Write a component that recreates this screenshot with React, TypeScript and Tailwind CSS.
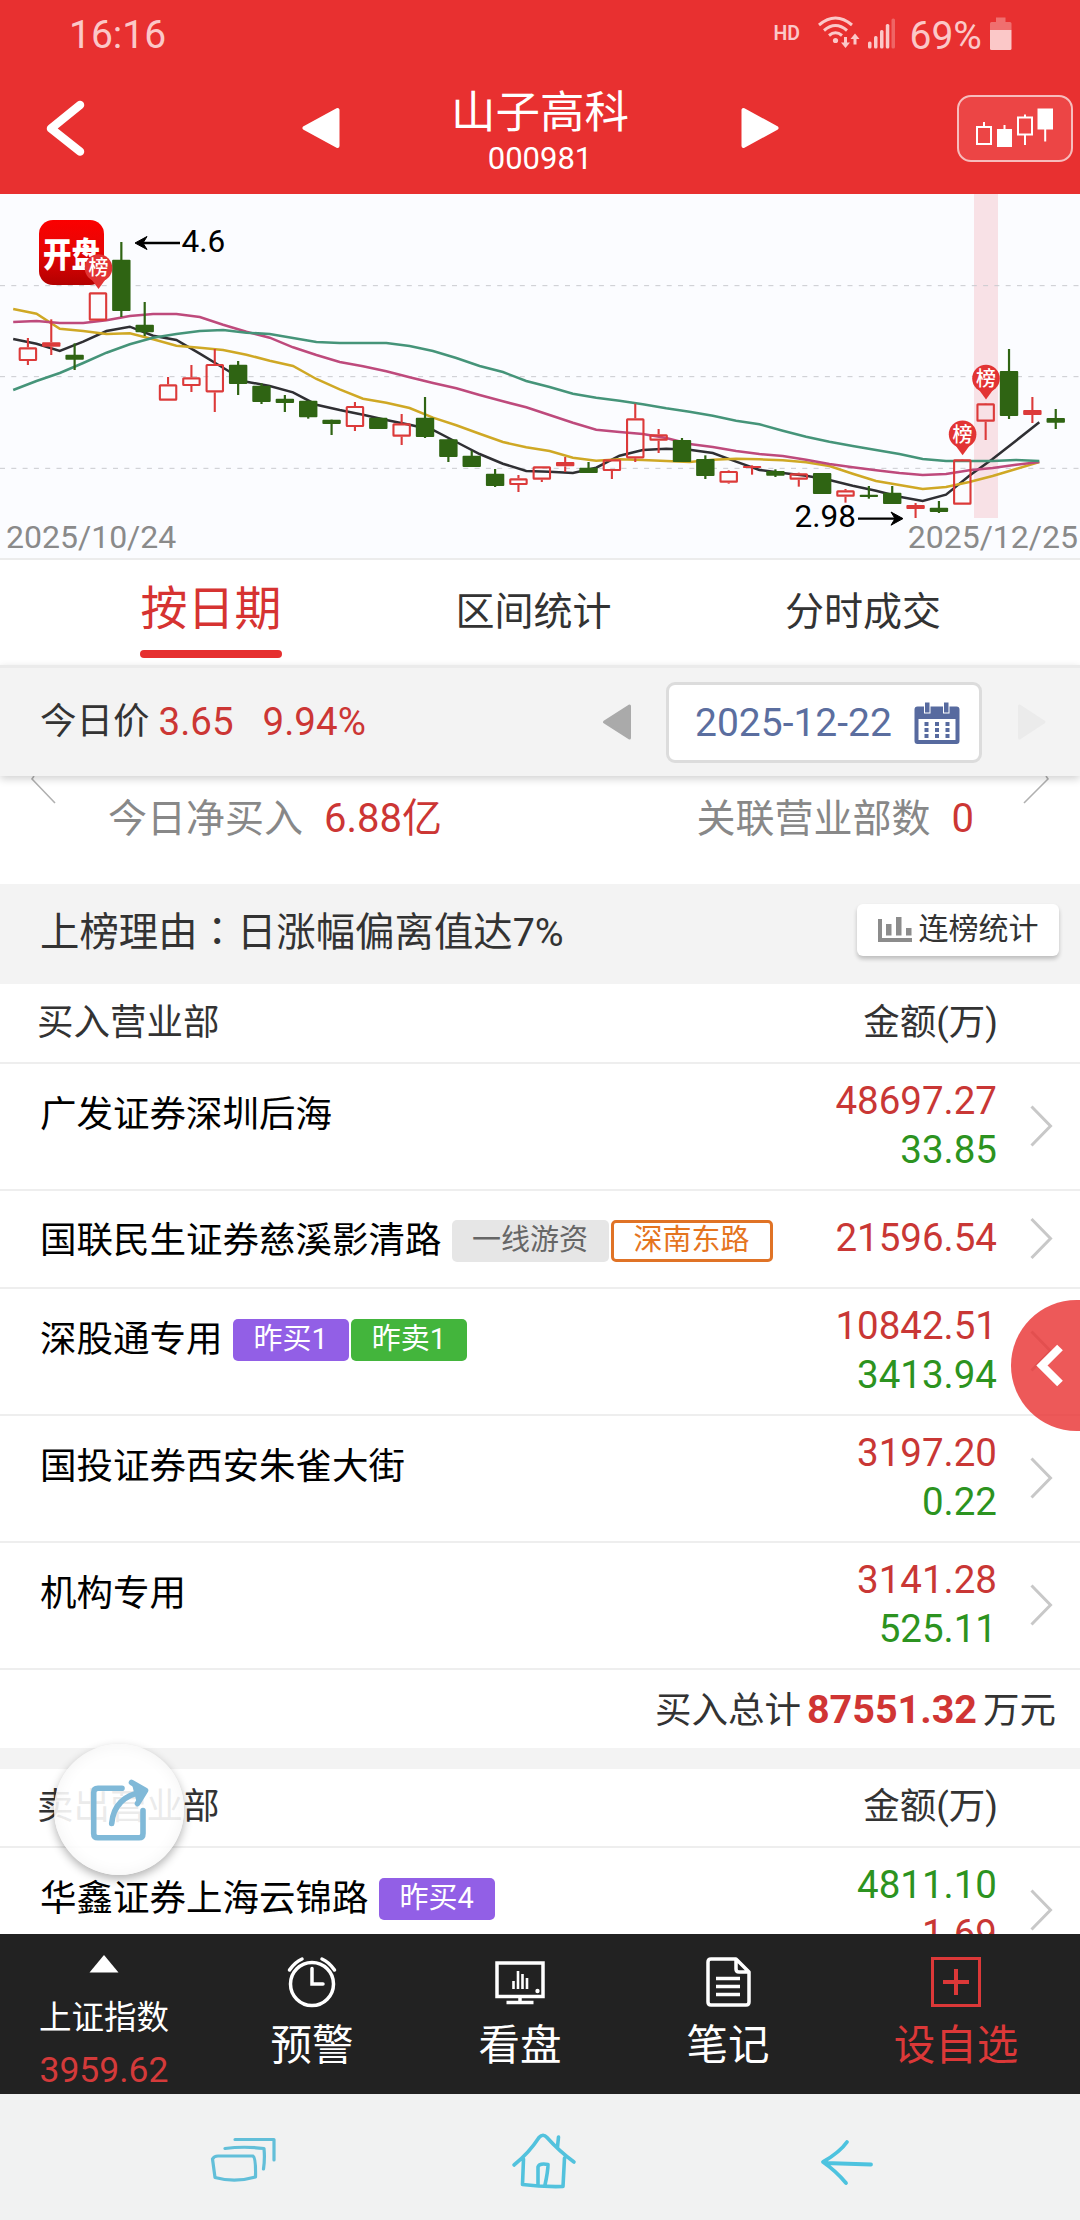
import React from "react";

type Candle = [kind: "r" | "g", high: number, top: number, bottom: number, low: number];

const candles: Candle[] = [
  ["r", 444, 472, 513, 525], ["r", 388, 457, 470, 495], ["g", 460, 494, 509, 540],
  ["r", 307, 307, 392, 392], ["g", 156, 209, 363, 381], ["g", 336, 404, 427, 438],
  ["r", 561, 583, 632, 632], ["r", 525, 562, 588, 606], ["r", 477, 522, 607, 666],
  ["g", 513, 524, 582, 615], ["g", 580, 587, 636, 642], ["g", 615, 626, 639, 666],
  ["g", 632, 632, 682, 686], ["g", 689, 689, 702, 735], ["r", 636, 648, 711, 723],
  ["g", 683, 683, 717, 717], ["r", 672, 700, 740, 765], ["g", 621, 683, 741, 744],
  ["g", 748, 748, 801, 816], ["g", 782, 797, 831, 831], ["g", 837, 851, 888, 891],
  ["r", 855, 865, 885, 906], ["r", 829, 829, 869, 876], ["r", 801, 816, 829, 846],
  ["g", 816, 833, 849, 849], ["r", 808, 808, 843, 867], ["r", 641, 685, 805, 816],
  ["r", 717, 733, 752, 789], ["g", 744, 750, 816, 816], ["g", 796, 807, 858, 867],
  ["r", 841, 843, 878, 881], ["r", 826, 828, 834, 854], ["g", 838, 843, 857, 861],
  ["r", 848, 850, 869, 890], ["g", 849, 849, 912, 912], ["r", 897, 901, 920, 938],
  ["g", 888, 914, 921, 926], ["g", 888, 908, 942, 942], ["r", 939, 945, 957, 984],
  ["g", 933, 953, 966, 969], ["r", 807, 808, 944, 944], ["r", 639, 640, 695, 750],
  ["g", 477, 543, 678, 687], ["r", 621, 660, 675, 699], ["g", 657, 684, 698, 717],
];

const averages = [
  {
    color: "#2f2f33",
    values: [447, 461, 483, 455, 423, 410, 437, 450, 491, 533, 575, 588, 607, 644, 660, 674, 690, 704, 720, 756, 792, 821, 843, 845, 849, 833, 797, 780, 776, 779, 789, 815, 840, 849, 857, 870, 887, 902, 920, 933, 914, 857, 807, 752, 697],
  },
  {
    color: "#cfa825",
    values: [357, 371, 416, 423, 432, 430, 448, 467, 473, 480, 494, 512, 528, 567, 598, 626, 638, 654, 683, 706, 731, 756, 772, 783, 803, 812, 808, 810, 813, 816, 809, 806, 808, 811, 817, 828, 851, 873, 885, 897, 891, 876, 858, 837, 816],
  },
  {
    color: "#be4a7c",
    values: [396, 393, 399, 399, 391, 378, 372, 372, 381, 404, 425, 443, 472, 495, 516, 529, 544, 562, 579, 595, 615, 634, 652, 675, 698, 719, 726, 732, 744, 762, 771, 783, 792, 798, 809, 822, 832, 841, 849, 855, 852, 841, 834, 824, 816],
  },
  {
    color: "#459479",
    values: [600, 573, 549, 519, 488, 463, 443, 432, 423, 420, 428, 432, 444, 456, 459, 459, 459, 468, 483, 504, 528, 546, 573, 591, 611, 623, 632, 643, 655, 665, 677, 692, 703, 722, 740, 755, 768, 780, 792, 807, 813, 813, 813, 810, 813],
  },
];

const toY = (v: number) => v / 3 - 4;
const candleX = (i: number) => 27.9 + i * 23.36;
const lineX = (i: number) => 13.2 + i * 23.32;

function Pin({ x, y }: { x: number; y: number }) {
  return (
    <g>
      <circle cx={x} cy={y} r="13.8" fill="#e23434" />
      <path d={`M${x - 8} ${y + 10}L${x} ${y + 21}L${x + 8} ${y + 10}Z`} fill="#e23434" />
      <text x={x} y={y + 7.4} fontSize="20" fontWeight="500" textAnchor="middle" fill="#fff">榜</text>
    </g>
  );
}

function Chart() {
  return (
    <svg className="block h-[364px] w-full" viewBox="0 0 1080 364">
      <defs>
        <linearGradient id="logo" x1="0" y1="0" x2="0" y2="1">
          <stop offset="0" stopColor="#fb0000" />
          <stop offset="0.45" stopColor="#e80505" />
          <stop offset="1" stopColor="#b30000" />
        </linearGradient>
      </defs>
      <rect x="974" y="0" width="24" height="324" fill="#f8e1e6" />
      {[287, 560, 835].map((v) => (
        <line key={v} x1="0" x2="1080" y1={toY(v)} y2={toY(v)} stroke="#c9cacf" strokeWidth="1" strokeDasharray="5 6.3" />
      ))}
      {averages.map((a) => (
        <polyline
          key={a.color}
          points={a.values.map((v, i) => `${lineX(i).toFixed(1)},${toY(v).toFixed(1)}`).join(" ")}
          fill="none"
          stroke={a.color}
          strokeWidth="2.5"
        />
      ))}
      <rect x="39" y="26" width="65" height="65" rx="14" fill="url(#logo)" />
      <text transform="translate(71.5 73) scale(1 1.2)" fontSize="28.5" fontWeight="900" textAnchor="middle" fill="#fff">开盘</text>
      {candles.map(([kind, high, top, bottom, low], i) => {
        const x = candleX(i);
        const h = (bottom - top) / 3;
        if (kind === "g") {
          return (
            <g key={i} fill="#2f6413">
              <rect x={x - 1.1} y={toY(high)} width="2.2" height={(low - high) / 3} />
              <rect x={x - 9.2} y={toY(top)} width="18.4" height={h} rx="1" />
            </g>
          );
        }
        return (
          <g key={i} stroke="#dc3a3a" strokeWidth="2.1" fill="none">
            <line x1={x} x2={x} y1={toY(high)} y2={toY(top)} />
            <line x1={x} x2={x} y1={toY(bottom)} y2={toY(low)} />
            {h < 5.5 ? (
              <rect x={x - 9.2} y={toY(top)} width="18.4" height={h} rx="1" fill="#dc3a3a" stroke="none" />
            ) : (
              <rect x={x - 8.2} y={toY(top) + 1} width="16.4" height={h - 2} rx="0.5" />
            )}
          </g>
        );
      })}
      <Pin x={98.5} y={74} />
      <Pin x={962.6} y={240.3} />
      <Pin x={986} y={184.5} />
      <g fill="none" stroke="#000" strokeWidth="2.4">
        <path d="M180 49H139" />
        <path d="M858 324.6H899" />
      </g>
      <path d="M135 49L147 42.5L143 49L147 55.5Z" fill="#000" stroke="#000" strokeLinejoin="round" />
      <path d="M903 324.6L891 318L895 324.6L891 331.2Z" fill="#000" stroke="#000" strokeLinejoin="round" />
      <text x="181.5" y="58" fontSize="31.5" fill="#000">4.6</text>
      <text x="794.5" y="332.5" fontSize="31.5" fill="#000">2.98</text>
      <text x="6" y="354" fontSize="32" fill="#8a8a8a">2025/10/24</text>
      <text x="1078" y="354" fontSize="32" textAnchor="end" fill="#8a8a8a">2025/12/25</text>
    </svg>
  );
}

function StatusBar() {
  return (
    <div className="flex h-[62px] items-center justify-between pr-[64px] pl-[69px] text-[#fbc8c8]">
      <span className="pt-[7px] text-[39px] leading-[50px]">16:16</span>
      <svg className="mt-1 h-[50px] w-[246px]" viewBox="770 7 246 50" fill="#fbc8c8">
        <text x="773.5" y="39" fontSize="19.5" fontWeight="600">HD</text>
        <g fill="none" stroke="#fbc8c8" strokeWidth="3">
          <path d="M819 24Q835.5 10 852 24" />
          <path d="M824 29.5Q835.5 19.5 847 29.5" />
          <path d="M829 34.5Q835.5 29 842 34.5" />
        </g>
        <circle cx="835.5" cy="39.5" r="2.6" />
        <path d="M844 36h3v5.500h3l-4.500 5.500l-4.500-5.500h3zM853.500 43.500h3v-5.500h3l-4.500-5.500l-4.500 5.500h3z" />
        <rect x="868" y="40.5" width="3.5" height="7" rx="1.5" />
        <rect x="874" y="35" width="3.5" height="12.5" rx="1.5" />
        <rect x="880" y="29" width="3.5" height="18.5" rx="1.5" />
        <rect x="885.8" y="23" width="3.5" height="24.5" rx="1.5" />
        <rect x="891.5" y="17.5" width="3.5" height="30" rx="1.5" opacity="0.35" />
        <text x="909.5" y="48" fontSize="39">69%</text>
        <path d="M990 29V22.500q0-1.500 1.500-1.500h4.500v-4.500h9.500v4.500h4.500q1.500 0 1.500 1.500V29z" opacity="0.42" />
        <path d="M990 29h21.500v18.500q0 1.500-1.500 1.500h-18.500q-1.500 0-1.500-1.500z" />
      </svg>
    </div>
  );
}

function TitleBar() {
  return (
    <div className="flex h-[132px] items-center justify-between pr-[7px] pl-[44px]">
      <svg className="h-[60px] w-[42px]" viewBox="0 0 42 60" fill="none" stroke="#fff" strokeWidth="8.5" strokeLinecap="round" strokeLinejoin="round">
        <path d="M36 7L7 30.500L36 53.500" />
      </svg>
      <div className="ml-[37px] flex items-center">
        <svg className="h-[42px] w-[38px]" viewBox="0 0 38 42" fill="#fff" stroke="#fff" strokeWidth="4" strokeLinejoin="round">
          <path d="M35.500 3V39L2.500 21Z" />
        </svg>
        <div className="mx-[63px] w-[275px] pt-[6px] text-center text-white">
          <div className="text-[44.500px] leading-[56px]">山子高科</div>
          <div className="text-[31px] leading-[36px]">000981</div>
        </div>
        <svg className="h-[42px] w-[38px]" viewBox="0 0 38 42" fill="#fff" stroke="#fff" strokeWidth="4" strokeLinejoin="round">
          <path d="M2.500 3V39L35.500 21Z" />
        </svg>
      </div>
      <div className="h-[67px] w-[116px] rounded-[14px] border-2 border-[#f7bcbc] bg-[#ec4545]">
        <svg className="h-full w-full" viewBox="959 97 112 63" fill="none" stroke="#fff" strokeWidth="2">
          <path d="M977 127h14v17h-14zM984 122v5" />
          <path d="M998 130h13v16h-13zM1004.500 125v5M1038.500 109.500h13.500v19h-13.500zM1045.200 129v12.500" fill="#fff" />
          <path d="M1018 117.500h14v17h-14zM1025 114.500v3M1025 134.500v10.500" />
        </svg>
      </div>
    </div>
  );
}

function Tabs() {
  return (
    <div className="flex h-[105px] justify-between bg-white pr-[139px] pl-[140px] text-[#333]">
      <div className="flex w-[142px] flex-col items-center justify-between pb-[7px]">
        <span className="pt-[7px] text-[47px] leading-[83px] whitespace-nowrap text-[#d63331]">按日期</span>
        <span className="h-[8px] w-[142px] rounded-full bg-[#e63030]" />
      </div>
      <span className="pt-[8px] text-[39px] leading-[88px]">区间统计</span>
      <span className="pt-[8px] text-[39px] leading-[88px]">分时成交</span>
    </div>
  );
}

function PriceBar() {
  return (
    <div className="relative z-10 flex h-[111px] items-center border-t-[3px] border-[#ebebeb] bg-[#f3f3f3] pr-[34px] pl-[40px] shadow-[0_3px_8px_rgba(0,0,0,0.18)]">
      <span className="text-[36.500px] text-[#333]">今日价</span>
      <span className="ml-[9px] text-[38.500px] text-[#cc3634]">3.65</span>
      <span className="ml-[29px] text-[38.500px] text-[#cc3634]">9.94%</span>
      <svg className="ml-auto h-[38px] w-[30px]" viewBox="0 0 30 38" fill="#aaa" stroke="#aaa" strokeWidth="3" strokeLinejoin="round">
        <path d="M27.500 3V35L2.500 19Z" />
      </svg>
      <div className="ml-[34px] flex h-[81px] w-[316px] items-center justify-between rounded-[9px] border-[3px] border-[#dcdcdc] bg-white pr-[19px] pl-[26px]">
        <span className="pt-[3px] text-[39px] text-[#5b6e9f]">2025-12-22</span>
        <svg className="mt-[2px] h-[44px] w-[46px]" viewBox="0 0 46 44" fill="#576a9f">
          <path d="M3.500 5.500H42.500Q45.500 5.500 45.500 8.500V40Q45.500 43 42.500 43H3.500Q.5 43 .5 40V8.500Q.5 5.500 3.500 5.500ZM4.500 18V39H41.500V18Z" fillRule="evenodd" />
          <rect x="10.5" y="1" width="5.5" height="11" stroke="#fff" strokeWidth="1" />
          <rect x="29.5" y="1" width="5.5" height="11" stroke="#fff" strokeWidth="1" />
          {[21, 27, 33].map((y) => [10.5, 21, 31.5].map((x) => <rect key={`${x}-${y}`} x={x} y={y} width="4" height="4" />))}
        </svg>
      </div>
      <svg className="ml-[35px] h-[38px] w-[29px]" viewBox="0 0 29 38" fill="#ebebeb" stroke="#ebebeb" strokeWidth="3" strokeLinejoin="round">
        <path d="M2.500 3V35L27 19Z" />
      </svg>
    </div>
  );
}

function Summary() {
  return (
    <div className="flex h-[108px] items-start bg-white px-[27px] text-[39px] leading-[56px] text-[#888]">
      <svg className="h-[30px] w-[30px]" viewBox="0 0 30 30" fill="none" stroke="#b0b0b0" strokeWidth="1.6">
        <path d="M7 0L5 3L28 27" />
      </svg>
      <div className="flex flex-1 justify-between pt-[15px] pr-[49px] pl-[51px]">
        <span>今日净买入<span className="ml-[21px] text-[40px] text-[#cc3634]">6.88亿</span></span>
        <span>关联营业部数<span className="ml-[21px] text-[40px] text-[#cc3634]">0</span></span>
      </div>
      <svg className="h-[30px] w-[30px]" viewBox="0 0 30 30" fill="none" stroke="#b0b0b0" strokeWidth="1.6">
        <path d="M23 0L25 3L1 27" />
      </svg>
    </div>
  );
}

function Reason() {
  return (
    <div className="flex h-[100px] items-center justify-between bg-[#f3f3f3] pr-[21px] pl-[40px]">
      <span className="pb-[6px] text-[39.400px] text-[#333]">
        上榜理由<span className="font-['Noto_Sans_CJK_TC']">：</span>日涨幅偏离值达7%
      </span>
      <button className="mb-[8px] flex h-[52px] w-[202px] items-center justify-center gap-[7px] rounded-[6px] bg-white shadow-[0_3px_4px_rgba(0,0,0,0.22)]">
        <svg className="h-[26px] w-[34px]" viewBox="0 0 34 26" fill="#8c8c8c">
          <path d="M0 2H4V21H34V25H0ZM8 7H13.500V18.500H8ZM18 0H23.500V18.500H18ZM28 11H33.500V18.500H28Z" />
        </svg>
        <span className="pb-[4px] text-[30px] text-[#333]">连榜统计</span>
      </button>
    </div>
  );
}

function ColumnHead({ title, height }: { title: string; height: string }) {
  return (
    <div className={`flex shrink-0 items-center justify-between border-b-2 border-[#eeeeee] bg-white pr-[82px] pl-[37px] text-[36.500px] text-[#333] ${height}`}>
      <span>{title}</span>
      <span>金额(万)</span>
    </div>
  );
}

const tagStyles = {
  gray: "bg-[#e6e6e6] text-[#666] px-[20.500px]",
  orange: "border-[3px] border-[#e07326] text-[#e5751f] px-[20px]",
  purple: "bg-[#925fe6] text-white px-[21px]",
  green: "bg-[#43b53c] text-white px-[21px]",
};

type RowData = {
  name: string;
  tags?: { text: string; tone: keyof typeof tagStyles }[];
  first: string;
  second?: string;
  sell?: boolean;
};

const buyRows: RowData[] = [
  { name: "广发证券深圳后海", first: "48697.27", second: "33.85" },
  {
    name: "国联民生证券慈溪影清路",
    tags: [{ text: "一线游资", tone: "gray" }, { text: "深南东路", tone: "orange" }],
    first: "21596.54",
  },
  {
    name: "深股通专用",
    tags: [{ text: "昨买1", tone: "purple" }, { text: "昨卖1", tone: "green" }],
    first: "10842.51",
    second: "3413.94",
  },
  { name: "国投证券西安朱雀大街", first: "3197.20", second: "0.22" },
  { name: "机构专用", first: "3141.28", second: "525.11" },
];

function Row({ row }: { row: RowData }) {
  const red = "text-[#c93735]";
  const green = "text-[#2c9320]";
  return (
    <div className={`flex shrink-0 items-start border-b-2 border-[#eeeeee] bg-white pl-[40px] ${row.second ? "h-[127px]" : "h-[98px]"}`}>
      <div className="flex h-[98px] flex-1 items-center">
        <span className={`text-[36.500px] whitespace-nowrap text-black ${row.second ? "pt-[4px]" : "pt-[2px]"}`}>{row.name}</span>
        <div className={`ml-[10px] flex gap-[2px] ${row.second ? "pt-[4px]" : "pt-[2px]"}`}>
          {row.tags?.map((t) => (
            <span key={t.text} className={`flex h-[42px] items-center rounded-[5px] text-[29px] whitespace-nowrap ${tagStyles[t.tone]}`}>
              {t.text}
            </span>
          ))}
        </div>
      </div>
      <div className={`text-right text-[38.500px] leading-[49px] ${row.second ? "pt-[12px]" : "pt-[22px]"}`}>
        <div className={row.sell ? green : red}>{row.first}</div>
        {row.second && <div className={row.sell ? red : green}>{row.second}</div>}
      </div>
      <svg className="mr-[27px] ml-[32px] h-full w-[24px]" viewBox="0 0 24 44" fill="none" stroke="#c8c8c8" strokeWidth="3">
        <path d="M2.500 2L21.500 21.500L2.500 41" />
      </svg>
    </div>
  );
}

function NavBar() {
  const label = "text-[41.500px] leading-[52px]";
  return (
    <div className="flex h-[160px] bg-[#222] text-white">
      <div className="flex w-[208px] flex-col items-center pt-[20px]">
        <svg className="h-[19px] w-[30px]" viewBox="0 0 30 19" fill="#fff"><path d="M15 1L29.500 18.500H.5Z" /></svg>
        <span className="mt-[23px] text-[32.500px] leading-[44px]">上证指数</span>
        <span className="mt-[10px] text-[35.500px] leading-[40px] text-[#d43a3a]">3959.62</span>
      </div>
      <div className="flex w-[208px] flex-col items-center pt-[22px]">
        <svg className="h-[52px] w-[52px]" viewBox="0 0 52 52" fill="none" stroke="#fff" strokeWidth="3.5" strokeLinecap="round">
          <circle cx="26" cy="28" r="21.5" />
          <path d="M26 12.500V28H37M3.500 14Q9 6 16 3M48.500 14Q43 6 36 3" />
        </svg>
        <span className={`mt-[12px] ${label}`}>预警</span>
      </div>
      <div className="flex w-[208px] flex-col items-center pt-[22px]">
        <svg className="h-[52px] w-[52px]" viewBox="0 0 52 52" fill="none" stroke="#fff" strokeWidth="3.5">
          <path d="M3 7H49V40.500H3ZM26 41V46M12.500 46.500H39.500" />
          <path d="M19.500 25V33M24 15V33M28.500 18V33M33 22V33" strokeWidth="2.6" />
          <circle cx="43.5" cy="35" r="2.2" fill="#fff" stroke="none" />
        </svg>
        <span className={`mt-[12px] ${label}`}>看盘</span>
      </div>
      <div className="flex w-[208px] flex-col items-center pt-[22px]">
        <svg className="h-[52px] w-[52px]" viewBox="0 0 52 52" fill="none" stroke="#fff" strokeWidth="3.5" strokeLinejoin="round">
          <path d="M34 3H9Q6 3 6 6V46Q6 49 9 49H44Q47 49 47 46V16ZM34 3V13Q34 16 37 16H47M14 22.500H38M14 30.500H38M14 38.500H38" />
        </svg>
        <span className={`mt-[12px] ${label}`}>笔记</span>
      </div>
      <div className="flex flex-1 flex-col items-center pt-[22px] text-[#dc3838]">
        <svg className="h-[52px] w-[52px]" viewBox="0 0 52 52" fill="none" stroke="#dc3838" strokeWidth="3">
          <path d="M2.500 2.500H49.500V49.500H2.500Z" />
          <path d="M26 13V39M13 26H39" strokeWidth="4" />
        </svg>
        <span className={`mt-[12px] ${label}`}>设自选</span>
      </div>
    </div>
  );
}

function SystemBar() {
  return (
    <div className="flex h-[126px] items-center justify-between bg-[#f1f2f2] pr-[206px] pl-[210px]">
      <svg className="mt-[6px] h-[52px] w-[66px]" viewBox="0 0 66 52" fill="none" stroke="#62bfd9" strokeWidth="3.2" strokeLinecap="round" strokeLinejoin="round">
        <path d="M25 5.500H64V26" />
        <path d="M15 14.500Q34 12 54 14.500Q55 25 53.500 35" />
        <path d="M2.500 25Q4 22 8 22H43Q46 24 45.500 43Q25 49 5 43.500Z" />
      </svg>
      <svg className="mt-[3px] mr-[8px] h-[60px] w-[66px]" viewBox="0 0 66 60" fill="none" stroke="#52c2dd" strokeWidth="3.6" strokeLinecap="round" strokeLinejoin="round">
        <path d="M3 36Q18 24 28 8.500Q32 4 36 8.500Q48 22 63 33M12.500 30L11.500 55.500Q30 58 52 57.500L53.500 29M27 56V38Q28 34 37 35.500Q37 42 34 56M46.500 18L47.500 8" />
      </svg>
      <svg className="mt-[12px] h-[50px] w-[54px]" viewBox="0 0 54 50" fill="none" stroke="#4dc3df" strokeWidth="3.8" strokeLinecap="round" strokeLinejoin="round">
        <path d="M27 4Q20 14 3 24Q16 33 26 45M5 25L51 26.500" />
      </svg>
    </div>
  );
}

export default function App() {
  return (
    <div className="relative flex h-[2220px] w-[1080px] flex-col overflow-hidden bg-white font-['Roboto','Noto_Sans_CJK_SC',sans-serif]">
      <header className="h-[194px] shrink-0 bg-[#e83030]">
        <StatusBar />
        <TitleBar />
      </header>
      <div className="h-[366px] shrink-0 border-b-2 border-[#ececec] bg-[#fbfcff]"><Chart /></div>
      <Tabs />
      <PriceBar />
      <Summary />
      <Reason />
      <main className="flex h-[950px] shrink-0 flex-col overflow-hidden">
        <ColumnHead title="买入营业部" height="h-[80px]" />
        {buyRows.map((r) => <Row key={r.name} row={r} />)}
        <div className="flex h-[78px] shrink-0 items-baseline justify-end bg-white pt-[14px] pr-[24px] text-[36.500px] leading-[52px] text-[#333]">
          <span>买入总计</span>
          <b className="mx-[6px] text-[39.500px] font-bold text-[#d03534]">87551.32</b>
          <span>万元</span>
        </div>
        <div className="h-[21px] shrink-0 bg-[#f3f3f3]" />
        <ColumnHead title="卖出营业部" height="h-[79px]" />
        <Row row={{ name: "华鑫证券上海云锦路", tags: [{ text: "昨买4", tone: "purple" }], first: "4811.10", second: "1.69", sell: true }} />
      </main>
      <NavBar />
      <SystemBar />

      <button className="absolute top-[1300px] left-[1011px] flex h-[131px] w-[131px] items-center rounded-full bg-[#e93434]/82 pl-[24px]">
        <svg className="h-[46px] w-[30px]" viewBox="0 0 30 46" fill="none" stroke="#fff" strokeWidth="8">
          <path d="M25 4.500L7 22.500L25 40.500" />
        </svg>
      </button>
      <button className="absolute top-[1744px] left-[54px] flex h-[131px] w-[130px] items-center justify-center rounded-full bg-white/90 shadow-[0_4px_10px_rgba(0,0,0,0.3),inset_0_0_16px_rgba(0,0,0,0.05)]">
        <svg className="h-[66px] w-[65px]" viewBox="86 1776.5 65 66" fill="none" stroke="#80b9d8" strokeWidth="5.6" strokeLinecap="round" strokeLinejoin="round">
          <path d="M121 1787.700H97Q92.700 1787.700 92.700 1792V1833Q92.700 1837.300 97 1837.300H138Q142 1837.300 142 1833V1810" />
          <path d="M110.700 1823Q113 1796 143 1791" />
          <path d="M130.500 1782L144 1790L136 1803Z" fill="#80b9d8" stroke="none" />
          <path d="M130.500 1782L144.500 1790L136.500 1803" />
        </svg>
      </button>
    </div>
  );
}
